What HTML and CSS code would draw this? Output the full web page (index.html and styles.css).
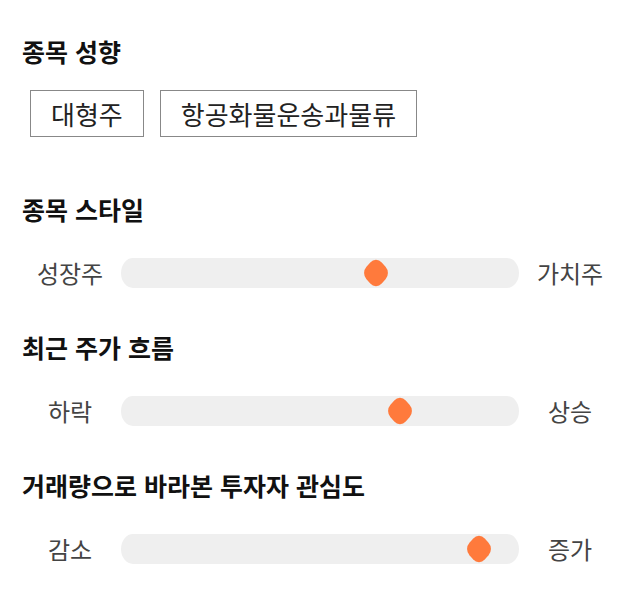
FILE: index.html
```html
<!DOCTYPE html>
<html lang="ko">
<head>
    <meta charset="UTF-8">
    <meta name="viewport" content="width=device-width, initial-scale=1.0">
    <title>종목 분석</title>
    <link rel="stylesheet" href="styles.css">
</head>
<body>
    <!-- 종목 성향 -->
    <div class="section section-tags">
        <h2 class="section-title">종목 성향</h2>
        <div class="tags">
            <span class="tag">대형주</span>
            <span class="tag">항공화물운송과물류</span>
        </div>
    </div>

    <!-- 종목 스타일 -->
    <div class="section">
        <h2 class="section-title">종목 스타일</h2>
        <div class="slider-row">
            <span class="slider-label">성장주</span>
            <div class="track">
                <span class="thumb" style="left: 64%;"></span>
            </div>
            <span class="slider-label">가치주</span>
        </div>
    </div>

    <!-- 최근 주가 흐름 -->
    <div class="section">
        <h2 class="section-title">최근 주가 흐름</h2>
        <div class="slider-row">
            <span class="slider-label">하락</span>
            <div class="track">
                <span class="thumb" style="left: 70%;"></span>
            </div>
            <span class="slider-label">상승</span>
        </div>
    </div>

    <!-- 투자자 관심도 -->
    <div class="section">
        <h2 class="section-title">거래량으로 바라본 투자자 관심도</h2>
        <div class="slider-row">
            <span class="slider-label">감소</span>
            <div class="track">
                <span class="thumb" style="left: 90%;"></span>
            </div>
            <span class="slider-label">증가</span>
        </div>
    </div>
</body>
</html>
```

FILE: styles.css
```css
/* General Styles */
body {
    font-family: 'Noto Sans CJK KR', 'Noto Sans', sans-serif;
    margin: 0;
    padding: 36px 0 0;
    background-color: #ffffff;
    color: #333;
}

.section {
    margin-bottom: 44px;
}

.section-tags {
    margin-bottom: 57px;
}

.section-title {
    margin: 0 0 0 22px;
    font-size: 25px;
    line-height: 30px;
    font-weight: 700;
    color: #111;
}

/* Tags */
.tags {
    display: flex;
    gap: 16px;
    margin: 24px 0 0 30px;
}

.tag {
    display: inline-block;
    height: 45px;
    line-height: 45px;
    padding: 0 20px;
    border: 1px solid #888;
    font-size: 26px;
    color: #222;
}

/* Slider Styles */
.slider-row {
    display: flex;
    align-items: center;
    gap: 11px;
    margin-top: 34px;
    padding: 0 30px;
}

.slider-label {
    width: 80px;
    text-align: center;
    font-size: 24px;
    line-height: 30px;
    color: #444;
}

.track {
    position: relative;
    flex: 1;
    height: 30px;
    background-color: #efefef;
    border-radius: 12px / 15px;
}

.thumb {
    position: absolute;
    top: 3px;
    width: 24px;
    height: 24px;
    margin-left: -12px;
    background-color: #ff7a3c;
    border-radius: 9px;
    transform: scale(0.9, 1) rotate(45deg);
}
```
